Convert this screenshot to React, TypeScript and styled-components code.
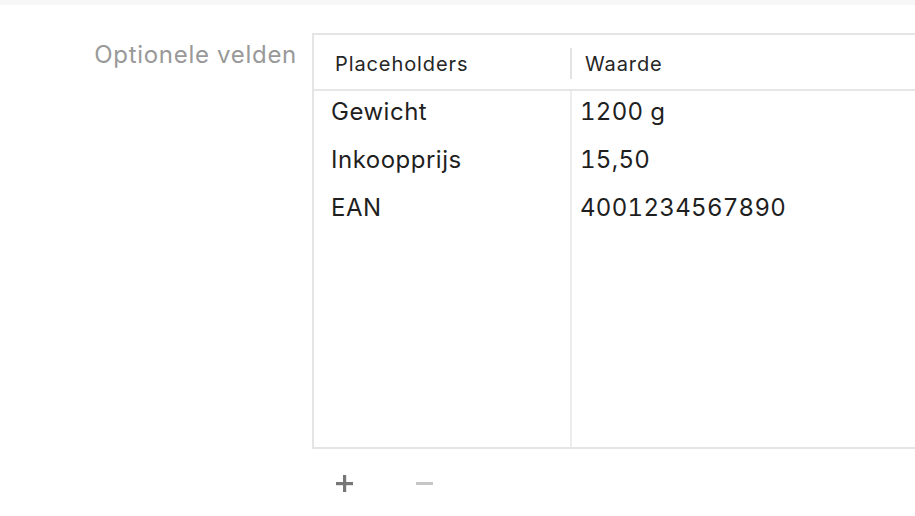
import React from 'react';
import styled, { createGlobalStyle } from 'styled-components';

const GlobalStyle = createGlobalStyle`
  html, body {
    margin: 0;
    padding: 0;
    background: #ffffff;
    overflow: hidden;
  }
  body {
    font-family: Inter, "Noto Sans", "Liberation Sans", sans-serif;
    color: #1f1f1f;
  }
`

const TopStrip = styled.div`
  height: 5px;
  background: #f7f7f7;
`

const FormRow = styled.div`
  display: grid;
  grid-template-columns: 297px 1fr;
  column-gap: 15px;
  margin-top: 28px;
`

const FieldLabel = styled.div`
  text-align: right;
  font-size: 24px;
  line-height: 30px;
  padding-top: 7px;
  letter-spacing: 0.7px;
  color: #999999;
  white-space: nowrap;
`

const FieldBody = styled.div`
  display: flex;
  flex-direction: column;
  min-width: 0;
`

const Table = styled.div`
  border: 2px solid #e5e5e5;
  border-right: none;
  display: flex;
  flex-direction: column;
`

const HeaderRow = styled.div`
  display: grid;
  grid-template-columns: 256px 1fr;
  height: 54px;
  border-bottom: 2px solid #e6e6e6;
`

const HeaderCell = styled.div<{ $divided?: boolean }>`
  display: flex;
  align-items: center;
  align-self: center;
  height: 31px;
  margin-top: 3px;
  padding-left: ${p => (p.$divided ? '13px' : '21px')};
  border-left: ${p => (p.$divided ? '2px solid #e3e3e3' : 'none')};
  font-size: 20px;
  letter-spacing: 0.9px;
  color: #262626;
  white-space: nowrap;
`

const BodyGrid = styled.div`
  display: grid;
  grid-template-columns: 256px 1fr;
  height: 356px;
`

const Column = styled.div<{ $divided?: boolean }>`
  display: flex;
  flex-direction: column;
  border-left: ${p => (p.$divided ? '2px solid #ededed' : 'none')};
`

const Cell = styled.div<{ $divided?: boolean }>`
  height: 48px;
  line-height: 41px;
  padding-left: ${p => (p.$divided ? '8px' : '17px')};
  font-size: 24px;
  letter-spacing: ${p => (p.$divided ? '0.3px' : '0.5px')};
  font-feature-settings: "tnum";
  color: #1f1f1f;
  white-space: nowrap;
`

const ButtonBar = styled.div`
  display: flex;
  gap: 40px;
  padding-left: 12px;
  margin-top: 20px;
`

const IconButton = styled.button<{ $disabled?: boolean }>`
  width: 40px;
  height: 28px;
  padding: 0;
  border: none;
  background: transparent;
  display: flex;
  align-items: center;
  justify-content: center;
  color: ${p => (p.$disabled ? '#c6c6c6' : '#777777')};
  cursor: ${p => (p.$disabled ? 'default' : 'pointer')};
`

const rows = [
  { key: 'Gewicht', value: '1200 g' },
  { key: 'Inkoopprijs', value: '15,50' },
  { key: 'EAN', value: '4001234567890' },
];

const PlusIcon = () => (
  <svg width="17" height="17" viewBox="0 0 17 17">
    <rect x="7" y="0" width="3.2" height="17" fill="currentColor" />
    <rect x="0" y="7" width="17" height="3.2" fill="currentColor" />
  </svg>
);

const MinusIcon = () => (
  <svg width="17" height="17" viewBox="0 0 17 17">
    <rect x="0" y="7" width="17" height="3" fill="currentColor" />
  </svg>
);

export default function App() {
  return (
    <>
      <GlobalStyle />
      <TopStrip />
      <FormRow>
        <FieldLabel>Optionele velden</FieldLabel>
        <FieldBody>
          <Table>
            <HeaderRow>
              <HeaderCell>Placeholders</HeaderCell>
              <HeaderCell $divided>Waarde</HeaderCell>
            </HeaderRow>
            <BodyGrid>
              <Column>
                {rows.map(r => <Cell key={r.key}>{r.key}</Cell>)}
              </Column>
              <Column $divided>
                {rows.map(r => <Cell key={r.key} $divided>{r.value}</Cell>)}
              </Column>
            </BodyGrid>
          </Table>
          <ButtonBar>
            <IconButton aria-label="Toevoegen"><PlusIcon /></IconButton>
            <IconButton aria-label="Verwijderen" $disabled><MinusIcon /></IconButton>
          </ButtonBar>
        </FieldBody>
      </FormRow>
    </>
  );
}
